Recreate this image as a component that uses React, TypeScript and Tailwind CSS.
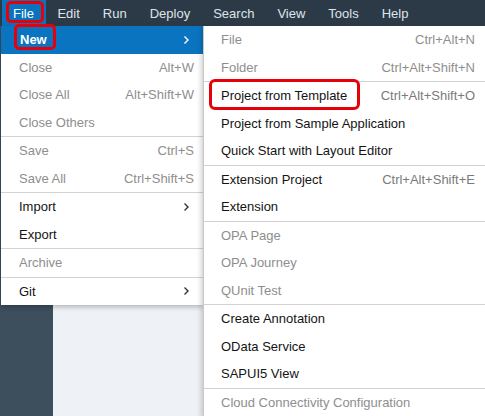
import React from 'react';

type Item = { label: string; shortcut?: string; disabled?: boolean; sub?: boolean; sep?: boolean };

const fileItems: Item[] = [
  { label: 'Close', shortcut: 'Alt+W', disabled: true },
  { label: 'Close All', shortcut: 'Alt+Shift+W', disabled: true },
  { label: 'Close Others', disabled: true, sep: true },
  { label: 'Save', shortcut: 'Ctrl+S', disabled: true },
  { label: 'Save All', shortcut: 'Ctrl+Shift+S', disabled: true, sep: true },
  { label: 'Import', sub: true },
  { label: 'Export', sep: true },
  { label: 'Archive', disabled: true, sep: true },
  { label: 'Git', sub: true },
];

const newItems: Item[] = [
  { label: 'File', shortcut: 'Ctrl+Alt+N', disabled: true },
  { label: 'Folder', shortcut: 'Ctrl+Alt+Shift+N', disabled: true, sep: true },
  { label: 'Project from Template', shortcut: 'Ctrl+Alt+Shift+O' },
  { label: 'Project from Sample Application' },
  { label: 'Quick Start with Layout Editor', sep: true },
  { label: 'Extension Project', shortcut: 'Ctrl+Alt+Shift+E' },
  { label: 'Extension', sep: true },
  { label: 'OPA Page', disabled: true },
  { label: 'OPA Journey', disabled: true },
  { label: 'QUnit Test', disabled: true, sep: true },
  { label: 'Create Annotation' },
  { label: 'OData Service' },
  { label: 'SAPUI5 View', sep: true },
  { label: 'Cloud Connectivity Configuration', disabled: true },
];

const menus = ['Edit', 'Run', 'Deploy', 'Search', 'View', 'Tools', 'Help'];

const Chevron = ({ color }: { color: string }) => (
  <svg width="7" height="10" viewBox="0 0 7 10" className="shrink-0">
    <polyline points="1.5,1.5 5,5 1.5,8.5" fill="none" stroke={color} strokeWidth="1.4" />
  </svg>
);

const Row = ({ item, pl, pr }: { item: Item; pl: string; pr: string }) => (
  <>
    <div className={`h-[27.5px] flex items-center justify-between ${pl} ${pr}`}>
      <span className={item.disabled ? 'text-[#8e8e8e]' : 'text-[#141414]'}>{item.label}</span>
      {item.shortcut && (
        <span className={item.disabled ? 'text-[#8e8e8e]' : 'text-[#7a7a7a]'}>{item.shortcut}</span>
      )}
      {item.sub && <span className="pr-[4px]"><Chevron color="#333" /></span>}
    </div>
    {item.sep && <div className="h-px bg-[#d3d3d3]" />}
  </>
);

export default function App() {
  return (
    <div
      className="relative w-[485px] h-[416px] overflow-hidden flex flex-col text-[13px] leading-none"
      style={{ fontFamily: '"Liberation Sans", Arial, sans-serif' }}
    >
      {/* menu bar */}
      <div className="h-[26px] shrink-0 bg-[#2c3a47] flex items-stretch text-[#dfe4e9]">
        <div className="ml-[2px] pl-[11px] pr-[12px] bg-[#0b72bd] text-white flex items-center">File</div>
        {menus.map((m) => (
          <div key={m} className="px-[11.5px] flex items-center">{m}</div>
        ))}
      </div>

      {/* workspace behind */}
      <div className="flex-1 flex">
        <div className="w-[53px] bg-[#3d4e5d]" />
        <div className="flex-1 bg-[#eef1f6]" />
      </div>

      {/* file menu */}
      <div className="absolute left-0 top-[26px] w-[203px] bg-[#3d4e5d] pl-px">
        <div className="bg-white shadow-[0_2px_5px_rgba(0,0,0,0.25)]">
          <div className="h-[27.5px] bg-[#0b74c0] flex items-center justify-between pl-[19px] pr-[13px] text-white font-bold">
            <span>New</span>
            <Chevron color="#fff" />
          </div>
          {fileItems.map((it) => (
            <Row key={it.label} item={it} pl="pl-[18px]" pr="pr-[9px]" />
          ))}
        </div>
      </div>

      {/* new submenu */}
      <div className="absolute left-[203px] top-[26px] w-[282px] bg-white border-l border-[#c8c8c8] shadow-[-2px_2px_5px_rgba(0,0,0,0.18)]">
        {newItems.map((it) => (
          <Row key={it.label} item={it} pl="pl-[17px]" pr="pr-[10px]" />
        ))}
      </div>

      {/* red annotation frames */}
      <div className="absolute left-[6px] top-[1px] w-[38px] h-[22px] rounded-[5px] border-[3px] border-[#e6000a]" />
      <div className="absolute left-[14px] top-[24px] w-[42px] h-[26px] rounded-[5px] border-[3px] border-[#e6000a]" />
      <div className="absolute left-[209px] top-[79px] w-[151px] h-[31px] rounded-[6px] border-[3px] border-[#e6000a]" />
    </div>
  );
}
